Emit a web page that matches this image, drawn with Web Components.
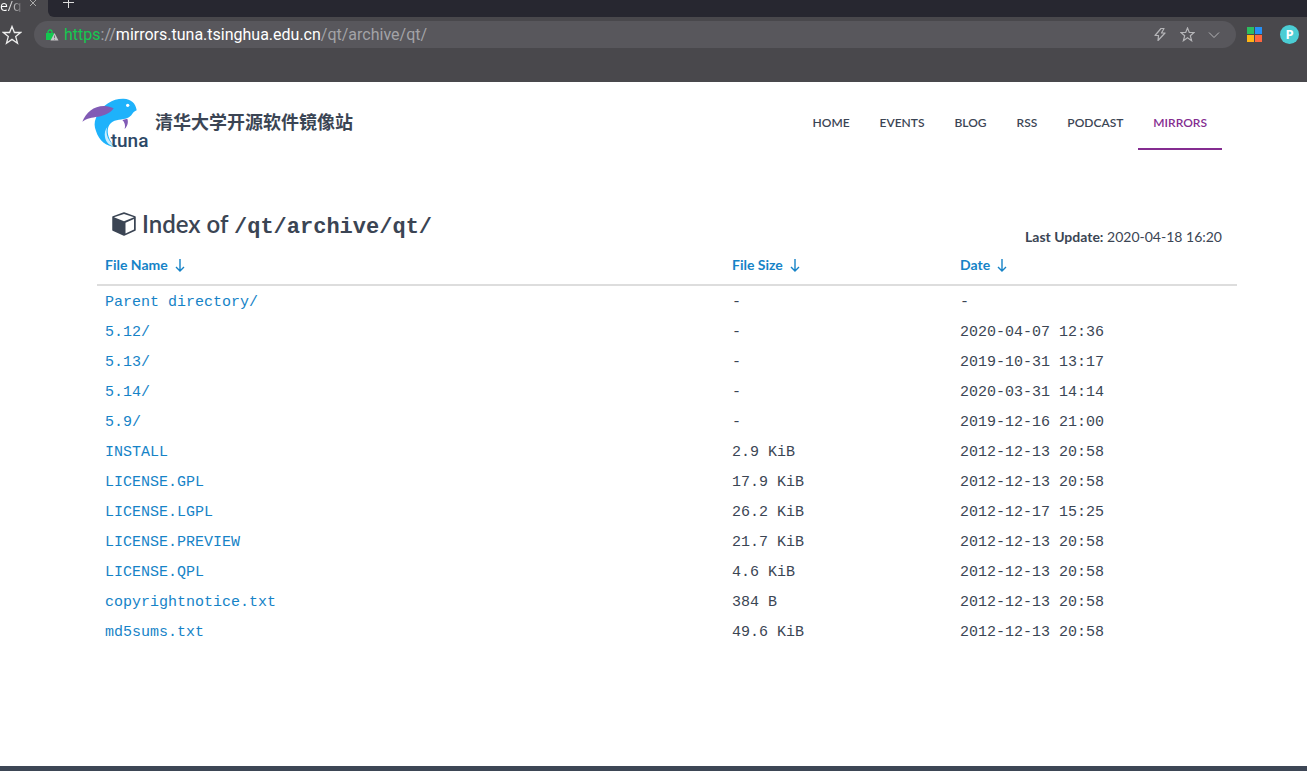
<!DOCTYPE html>
<html lang="zh-CN">
<head>
<meta charset="utf-8">
<title>Index of /qt/archive/qt/</title>
<style>
html, body { margin: 0; }
body { background: #fff; color: #3b4554; font-family: Lato, "Noto Sans CJK SC", sans-serif; font-size: 14px; }
</style>
</head>
<body>
<mirror-app></mirror-app>

<template id="t-app">
<style>
:host { display: flex; flex-direction: column; min-height: 100vh; }
.page { flex: 1; padding-left: 27px; }
main { max-width: 1140px; margin: 0 auto; }
footer { height: 5px; background: #3d4655; }
</style>
<browser-bar></browser-bar>
<div class="page">
<site-header></site-header>
<main>
<index-heading path="/qt/archive/qt/" updated="2020-04-18 16:20"></index-heading>
<file-table></file-table>
</main>
</div>
<footer></footer>
</template>

<template id="t-browser">
<style>
:host { display: block; height: 82px; background: #49484c; font-family: "Open Sans", "Noto Sans", sans-serif; color: #ddd; }
button { border: 0; padding: 0; background: none; color: inherit; display: block; }
svg { display: block; fill: none; stroke: currentColor; }
svg.solid { stroke: none; }
.tabs { display: flex; height: 17px; }
.tab { width: 48px; display: flex; align-items: flex-end; }
.tab span { width: 24px; height: 12px; line-height: 12px; font-size: 14px; margin-bottom: 5px; white-space: nowrap; color: transparent; background: linear-gradient(90deg, #fff 30%, #66656a 90%); background-clip: text; -webkit-background-clip: text; }
.tab button { margin: 0 0 10px 5px; color: #aaa; }
.strip { flex: 1; background: #272730; border-bottom-left-radius: 6px; display: flex; align-items: flex-end; }
.strip button { margin: 0 0 9px 15px; }
.bar { display: flex; align-items: center; height: 35px; padding: 0 8px 0 2px; }
.favourite { color: #eee; }
.address { flex: 1; display: flex; align-items: center; height: 27px; margin: 0 11px 0 12px; padding: 0 16px 0 12px; border-radius: 14px; background: #58575c; color: #a3a3a7; }
.url { flex: 1; margin-left: 5px; font-family: Roboto, "Open Sans", sans-serif; font-size: 16px; line-height: 24px; white-space: nowrap; overflow: hidden; }
.url i { font-style: normal; color: #14c850; }
.url b { font-weight: 400; color: #fff; }
.tools { display: flex; align-items: center; gap: 13px; color: #b5b5b8; }
.avatar { width: 19px; height: 19px; border-radius: 50%; background: #4bcdd4; color: #fff; font-size: 13px; line-height: 19px; font-weight: 700; font-family: inherit; text-align: center; margin-left: 18px; }
</style>
<div class="tabs">
<div class="tab"><span>e/q</span><button aria-label="Close tab"><svg width="8" height="8" viewBox="0 0 8 8"><path d="M1 1l6 6M7 1l-6 6"/></svg></button></div>
<div class="strip"><button aria-label="New tab"><svg width="11" height="11" viewBox="0 0 11 11"><path d="M5.500 0v11M0 5.500h11"/></svg></button></div>
</div>
<div class="bar">
<button class="favourite" aria-label="Favourites"><svg width="20" height="20" viewBox="0 0 20 20" stroke-width="1.300"><path d="M10 1.500l2.400 6h6.300l-5 4.100 1.800 6.600L10 14.400l-5.500 3.800 1.800-6.600-5-4.100h6.300z"/></svg></button>
<div class="address">
<svg class="solid" width="13" height="12" viewBox="0 0 13 12"><path d="M2 5V3a2 2 0 0 1 4 0v2" fill="none" stroke="#14c850" stroke-width="1.300"/><path d="M0 4h8v7H0z" fill="#14c850"/><path d="M8.500 4L12.500 11.500H4.500z" fill="#c5c5c8"/><path d="M8.500 6.500v2.500M8.500 9.800v.8" stroke="#77767a"/></svg>
<div class="url" role="textbox" aria-label="Address" tabindex="0"><i>https</i>://<b>mirrors.tuna.tsinghua.edu.cn</b>/qt/archive/qt/</div>
<div class="tools">
<button aria-label="Compatibility mode"><svg width="14" height="15" viewBox="0 0 14 15" stroke-width="1.200"><path d="M8 1.500L2 8.500h3.500L5 13.500l7-7.500H8.500L11 1.500z" stroke-linejoin="round"/></svg></button>
<button aria-label="Bookmark"><svg width="15" height="15" viewBox="0 0 15 15" stroke-width="1.200"><path d="M7.500 1l1.800 4.500h4.700l-3.700 3.200 1.300 5-4.100-2.900-4.100 2.900 1.300-5L1 5.500h4.700z"/></svg></button>
<button aria-label="More"><svg width="12" height="8" viewBox="0 0 12 8"><path d="M1 1.500l5 5 5-5"/></svg></button>
</div>
</div>
<button aria-label="Extensions"><svg class="solid" width="15" height="15" viewBox="0 0 15 15"><path fill="#2dbe60" d="M0 0h7v7H0z"/><path fill="#2590f5" d="M8 0h7v7H8z"/><path fill="#ffb514" d="M0 8h7v7H0z"/><path fill="#ff6640" d="M8 8h7v7H8z"/></svg></button>
<button class="avatar" aria-label="Account">P</button>
</div>
</template>

<template id="t-header">
<style>
:host { display: block; }
header { box-sizing: border-box; max-width: 1140px; margin: 0 auto; padding: 14px 15px 0 0; height: 82px; display: flex; justify-content: space-between; align-items: flex-start; }
.brand { display: flex; align-items: center; gap: 8px; height: 54px; margin-left: -15px; color: #3b4554; text-decoration: none; font-size: 18px; font-weight: 700; }
.brand span { font-family: "Noto Sans CJK SC", sans-serif; line-height: 24px; padding-bottom: 4px; }
svg { display: block; overflow: visible; }
nav { display: flex; }
nav a { padding: 0 15px; height: 52px; line-height: 54px; border-bottom: 2px solid transparent; font-size: 12px; font-weight: 600; color: #3b4554; text-decoration: none; }
nav a[aria-current] { color: #842c90; border-color: #842c90; }
</style>
<header>
<a class="brand" href="#"><svg width="65" height="50" viewBox="20 25 195 150" aria-hidden="true">
<path fill="#1eb2fb" d="M62 84C82 42 114 26 145 27C167 28 181 40 184 62C171 67 172 76 161 83C149 91 127 88 112 96C97 105 94 123 100 141C104 154 111 163 119 171C93 171 71 153 62 124C57 110 56 98 62 84z"/>
<path fill="#c9edff" d="M96 112C88 133 101 157 119 171C104 170 91 158 89 143C87 131 89 120 96 112z"/>
<path fill="#815bb5" d="M21 96C32 68 56 48 88 49C97 49 107 52 115 56C105 70 88 78 68 81C49 84 36 85 21 96z"/>
<path fill="#815bb5" d="M156 87C160 98 156 110 148 118C151 107 148 98 141 91z"/>
<circle cx="157" cy="47" r="5" fill="#fff"/>
<text x="106" y="171" font-family="Roboto, Liberation Sans, sans-serif" font-weight="500" font-size="57" fill="#2c4766">tuna</text></svg>
<span>清华大学开源软件镜像站</span></a>
<nav aria-label="Main"><a href="#">HOME</a><a href="#">EVENTS</a><a href="#">BLOG</a><a href="#">RSS</a><a href="#">PODCAST</a><a href="#" aria-current="page">MIRRORS</a></nav>
</header>
</template>

<template id="t-heading">
<style>
:host { display: flex; justify-content: space-between; align-items: flex-end; padding: 40px 15px 0; }
h1 { margin: 0; display: flex; align-items: center; font-size: 24px; line-height: 40px; font-weight: 600; padding-bottom: 3px; }
svg { margin-right: 6px; }
code { font-family: "Liberation Mono", monospace; font-size: 22px; line-height: 24px; font-weight: 700; }
p { margin: 0; font-size: 14px; line-height: 20px; }
</style>
<h1><svg width="24" height="24" viewBox="0 0 24 24" aria-hidden="true"><path d="M1 5L12 1l11 4v13l-11 5L1 18z" fill="#3b4554" stroke="#3b4554" stroke-width="1.500" stroke-linejoin="round"/><path d="M2 5.300L12 2l10 3.300-10 4zM13.500 10.800L22 7v10.500l-8.500 4z" fill="#fff"/></svg><span>Index of <code></code></span></h1>
<p><b>Last Update:</b> <time></time></p>
</template>

<template id="t-table">
<style>
:host { display: block; }
table { width: 100%; border-collapse: separate; border-spacing: 0; table-layout: fixed; }
th, td { box-sizing: border-box; }
th { text-align: left; height: 39px; padding: 8px 8px 0; border-bottom: 2px solid #ddd; font-size: 14px; line-height: 20px; vertical-align: top; }
th a { display: flex; align-items: center; gap: 7px; }
th:first-child { width: 55%; } th:nth-child(2) { width: 20%; }
td { height: 30px; padding: 4px 8px 0; font: 15px/20px "Liberation Mono", monospace; }
a { color: #1683c7; text-decoration: none; }
</style>
<table><thead><tr></tr></thead><tbody></tbody></table>
</template>

<script>
function stamp(host, id) {
  const root = host.attachShadow({ mode: 'open' });
  root.append(document.getElementById(id).content.cloneNode(true));
  return root;
}
class BrowserBar extends HTMLElement { constructor() { super(); stamp(this, 't-browser'); } }
class SiteHeader extends HTMLElement { constructor() { super(); stamp(this, 't-header'); } }
class IndexHeading extends HTMLElement {
  connectedCallback() {
    if (this.shadowRoot) return;
    const root = stamp(this, 't-heading');
    root.querySelector('code').textContent = this.getAttribute('path');
    root.querySelector('time').textContent = this.getAttribute('updated');
  }
}
class FileTable extends HTMLElement {
  constructor() {
    super();
    const root = stamp(this, 't-table');
    const arrow = '<svg width="10" height="13" viewBox="0 0 10 13" fill="none" stroke="currentColor" stroke-width="1.400" aria-hidden="true"><path d="M5 0v12M1 8l4 4 4-4"/></svg>';
    root.querySelector('thead tr').innerHTML = ['File Name', 'File Size', 'Date']
      .map(t => `<th scope="col"><a href="#">${t} ${arrow}</a></th>`).join('');
    const rows = [
      ['Parent directory/', '-', '-'],
      ['5.12/', '-', '2020-04-07 12:36'],
      ['5.13/', '-', '2019-10-31 13:17'],
      ['5.14/', '-', '2020-03-31 14:14'],
      ['5.9/', '-', '2019-12-16 21:00'],
      ['INSTALL', '2.9 KiB', '2012-12-13 20:58'],
      ['LICENSE.GPL', '17.9 KiB', '2012-12-13 20:58'],
      ['LICENSE.LGPL', '26.2 KiB', '2012-12-17 15:25'],
      ['LICENSE.PREVIEW', '21.7 KiB', '2012-12-13 20:58'],
      ['LICENSE.QPL', '4.6 KiB', '2012-12-13 20:58'],
      ['copyrightnotice.txt', '384 B', '2012-12-13 20:58'],
      ['md5sums.txt', '49.6 KiB', '2012-12-13 20:58']
    ];
    root.querySelector('tbody').innerHTML = rows
      .map(([n, s, d]) => `<tr><td><a href="#">${n}</a></td><td>${s}</td><td>${d}</td></tr>`).join('');
  }
}
class MirrorApp extends HTMLElement { constructor() { super(); stamp(this, 't-app'); } }
customElements.define('browser-bar', BrowserBar);
customElements.define('site-header', SiteHeader);
customElements.define('index-heading', IndexHeading);
customElements.define('file-table', FileTable);
customElements.define('mirror-app', MirrorApp);
</script>
</body>
</html>
